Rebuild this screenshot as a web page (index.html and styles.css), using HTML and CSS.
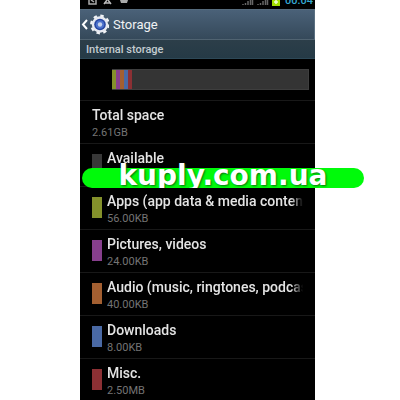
FILE: index.html
```html
<!DOCTYPE html>
<html lang="en">
<head>
<meta charset="utf-8">
<title>Storage</title>
<link rel="stylesheet" href="styles.css">
</head>
<body>
<main class="phone">
  <div class="status">
    <svg class="status-left" width="50" height="9" viewBox="0 0 50 9" aria-hidden="true">
      <path d="M9 0v4h7V0M11 0l3 2" fill="none" stroke="#aaa" stroke-width="1.5"/>
      <path d="M27 0l-3 4M28 0l3 4M25 3h5" fill="none" stroke="#bbb" stroke-width="1.5"/>
      <path d="M40 0h8l-1 3h-6z" fill="#aaa"/>
    </svg>
    <div class="status-right">
      <svg width="40" height="9" viewBox="0 0 40 9" aria-hidden="true">
        <path d="M2 5V4M4.500 5V3M7 5V1M9.500 5V0M11.500 5V0M17 5V4M19.500 5V3M22 5V1M24.500 5V0M26.500 5V0" stroke="#666" stroke-width="1.500"/>
        <path d="M31 0h8v6h-8z" fill="#a4e000"/>
        <path d="M33 2h4M35 0v4" stroke="#efffd0" stroke-width="1.500"/>
      </svg>
      <span class="clock">00:04</span>
    </div>
  </div>
  <header class="bar">
    <button class="back" aria-label="Back">
      <svg width="29" height="22" viewBox="0 0 29 22" aria-hidden="true">
        <path d="M7 6L3 10.500L7 15" fill="none" stroke="#fff" stroke-width="2"/>
        <circle cx="20" cy="10.500" r="8.600" fill="none" stroke="#f2f4f8" stroke-width="2.600" stroke-dasharray="3.380 3.380"/>
        <circle cx="20" cy="10.500" r="8.200" fill="#e6e9f0"/>
        <circle cx="20" cy="10.500" r="5.800" fill="#2444a0"/>
        <circle cx="20" cy="10.500" r="4.300" fill="#4a70cc"/>
        <circle cx="20" cy="10.500" r="2.200" fill="#c4d2ee"/>
      </svg>
    </button>
    <h1>Storage</h1>
  </header>
  <h2>Internal storage</h2>
  <div class="usage">
    <div class="meter">
      <i class="apps"></i><i class="pictures"></i><i class="audio"></i><i class="downloads"></i><i class="misc"></i>
    </div>
  </div>
  <ul>
    <li><div class="text"><p>Total space</p><small>2.61GB</small></div></li>
    <li class="covered"><i class="available"></i><div class="text"><p>Available</p></div>
      <div class="banner"><span>kuply.com.ua</span></div>
    </li>
    <li><i class="apps"></i><div class="text"><p>Apps (app data &amp; media content)</p><small>56.00KB</small></div></li>
    <li><i class="pictures"></i><div class="text"><p>Pictures, videos</p><small>24.00KB</small></div></li>
    <li><i class="audio"></i><div class="text"><p>Audio (music, ringtones, podcasts)</p><small>40.00KB</small></div></li>
    <li><i class="downloads"></i><div class="text"><p>Downloads</p><small>8.00KB</small></div></li>
    <li><i class="misc"></i><div class="text"><p>Misc.</p><small>2.50MB</small></div></li>
  </ul>
</main>
</body>
</html>
```
FILE: styles.css
```css
* { box-sizing: border-box; }
html { background: #fff; overflow: hidden; }
body {
  margin: 0;
  padding: 0 85px 0 80px;
  font-family: Roboto, "Liberation Sans", sans-serif;
  color: #e4e4e4;
}
h1, h2, p, ul { margin: 0; padding: 0; font-weight: 400; }
.phone { background: #000; }
.status {
  display: flex;
  justify-content: space-between;
  height: 9px;
}
.status-right { display: flex; gap: 4px; padding-right: 2px; }
.clock {
  font-size: 11px;
  line-height: 12px;
  margin-top: -5px;
  font-weight: 500;
  color: #35a9d2;
}
.bar {
  display: flex;
  align-items: center;
  height: 31px;
  background: linear-gradient(#4a6178, #35495a);
  border-top: 1px solid #566b7d;
  border-right: 1px solid #5a6f80;
  border-bottom: 1px solid #506371;
}
.back {
  display: flex;
  padding: 0;
  border: 0;
  background: none;
}
h1 {
  margin-left: 4px;
  font-size: 13px;
  line-height: 16px;
  color: #f0f2f4;
}
h2 {
  height: 19px;
  padding-left: 6px;
  font-size: 11px;
  line-height: 19px;
  font-weight: 500;
  color: #c3cbd0;
  background: linear-gradient(#2c3e49, #253a46);
  border-bottom: 1px solid #2d4857;
}
.usage { padding: 10px 6px 10px 32px; }
.meter {
  display: flex;
  height: 21px;
  background: #343434;
  border: 1px solid #3e3e3e;
  border-left: 0;
}
.meter i { width: 4px; }
ul { list-style: none; }
li {
  display: flex;
  min-height: 43px;
  padding: 6px 12px 0 12px;
  border-top: 1px solid #181818;
}
li > i {
  flex: none;
  width: 10px;
  height: 21px;
  margin: 4px 5px 0 0;
}
.text { flex: 1; min-width: 0; }
.text p {
  overflow: hidden;
  white-space: nowrap;
  font-size: 14px;
  line-height: 16px;
  font-weight: 500;
  -webkit-mask-image: linear-gradient(to left, transparent, #000 12px);
  mask-image: linear-gradient(to left, transparent, #000 12px);
}
small {
  display: block;
  margin-top: 2px;
  font-size: 11px;
  line-height: 16px;
  color: #747474;
}
.available { background: #383838; }
.apps { background: #84912b; }
.pictures { background: #873f8d; }
.audio { background: #a35f31; }
.downloads { background: #4a69a4; }
.misc { background: #8c3034; }
.covered { position: relative; }
.banner {
  position: absolute;
  top: 24px;
  left: 2px;
  right: -49px;
  height: 20px;
  border-radius: 10px;
  background: #00fa0a;
  color: #fff;
  text-align: center;
  font: bold 28px/22px "DejaVu Sans", sans-serif;
  text-shadow: 1px 1px 2px #087010;
  clip-path: inset(-10px 0 0 0);
}
.banner span { display: block; margin-top: -3px; }
```
